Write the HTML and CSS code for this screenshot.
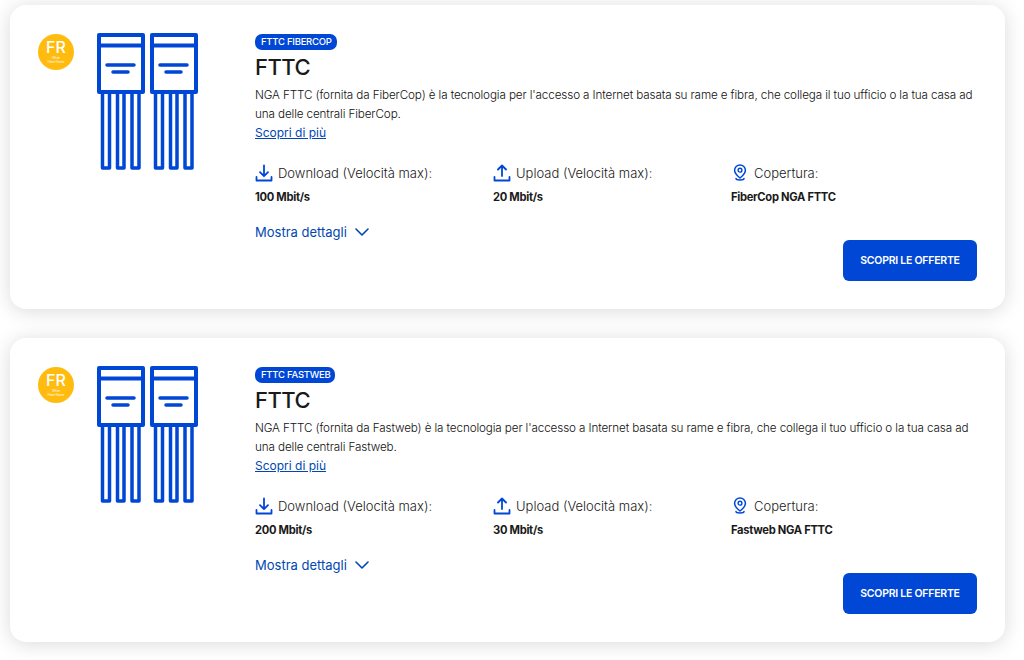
FILE: index.html
```html
<!DOCTYPE html>
<html lang="it">
    <head>
        <title>Offerte FTTC</title>
        <meta charset="utf-8" />
        <link rel="stylesheet" href="styles.css">
    </head>
    <body>
        <svg class="defs" width="0" height="0">
            <symbol id="chip" viewBox="0 0 103 137">
                <g id="chip-half" fill="none" stroke="#0047d6" stroke-linejoin="round" stroke-linecap="round">
                    <rect x="3" y="2" width="44" height="57" stroke-width="4" />
                    <path d="M3 12.5H47" stroke-width="4" />
                    <path d="M11 32H38M17 39H32" stroke-width="3.5" />
                    <path d="M6.5 60V135H13.5V60M21.5 60V135H28V60M36 60V135H43V60" stroke-width="3.5" />
                </g>
                <use href="#chip-half" x="53" />
            </symbol>
            <symbol id="icon-download" viewBox="0 0 18 18">
                <path d="M9 1.5V12M5 8.2L9 12.2L13 8.2M1.5 13V16.5H16.5V13" fill="none" stroke="#0047d6" stroke-width="1.8" stroke-linecap="round" stroke-linejoin="round" />
            </symbol>
            <symbol id="icon-upload" viewBox="0 0 18 18">
                <path d="M9 12V1.5M5 5.5L9 1.5L13 5.5M1.5 13V16.5H16.5V13" fill="none" stroke="#0047d6" stroke-width="1.8" stroke-linecap="round" stroke-linejoin="round" />
            </symbol>
            <symbol id="icon-pin" viewBox="0 0 18 18">
                <path d="M9 14C6 11.6 3.6 9.2 3.6 6.2A5.4 5.2 0 0 1 14.4 6.2C14.4 9.2 12 11.6 9 14ZM5 14.6C5 16.6 13 16.6 13 14.6" fill="none" stroke="#0047d6" stroke-width="1.5" stroke-linecap="round" stroke-linejoin="round" />
                <circle cx="9" cy="6.2" r="1.9" fill="none" stroke="#0047d6" stroke-width="1.4" />
            </symbol>
        </svg>

        <div class="list">
            <div class="card">
                <div class="logo">
                    <span class="logo-big">FR</span>
                    <span class="logo-small">White<br>Fibre Home</span>
                </div>
                <svg class="chip"><use href="#chip" /></svg>
                <div class="main">
                    <span class="badge">FTTC FIBERCOP</span>
                    <h2 class="title">FTTC</h2>
                    <p class="desc">NGA FTTC (fornita da FiberCop) è la tecnologia per l'accesso a Internet basata su rame e fibra, che collega il tuo ufficio o la tua casa ad una delle centrali FiberCop.</p>
                    <a class="more" href="#">Scopri di più</a>
                    <div class="stats">
                        <div class="stat">
                            <div class="stat-label"><svg class="stat-icon"><use href="#icon-download" /></svg>Download (Velocità max):</div>
                            <div class="stat-value">100 Mbit/s</div>
                        </div>
                        <div class="stat">
                            <div class="stat-label"><svg class="stat-icon"><use href="#icon-upload" /></svg>Upload (Velocità max):</div>
                            <div class="stat-value">20 Mbit/s</div>
                        </div>
                        <div class="stat">
                            <div class="stat-label"><svg class="stat-icon"><use href="#icon-pin" /></svg>Copertura:</div>
                            <div class="stat-value">FiberCop NGA FTTC</div>
                        </div>
                    </div>
                    <a class="details" href="#">Mostra dettagli
                        <svg class="chevron" viewBox="0 0 14 8"><path d="M1 1L7 7L13 1" /></svg>
                    </a>
                    <div class="actions"><a class="btn" href="#">SCOPRI LE OFFERTE</a></div>
                </div>
            </div>

            <div class="card">
                <div class="logo">
                    <span class="logo-big">FR</span>
                    <span class="logo-small">White<br>Fibre Home</span>
                </div>
                <svg class="chip"><use href="#chip" /></svg>
                <div class="main">
                    <span class="badge">FTTC FASTWEB</span>
                    <h2 class="title">FTTC</h2>
                    <p class="desc">NGA FTTC (fornita da Fastweb) è la tecnologia per l'accesso a Internet basata su rame e fibra, che collega il tuo ufficio o la tua casa ad una delle centrali Fastweb.</p>
                    <a class="more" href="#">Scopri di più</a>
                    <div class="stats">
                        <div class="stat">
                            <div class="stat-label"><svg class="stat-icon"><use href="#icon-download" /></svg>Download (Velocità max):</div>
                            <div class="stat-value">200 Mbit/s</div>
                        </div>
                        <div class="stat">
                            <div class="stat-label"><svg class="stat-icon"><use href="#icon-upload" /></svg>Upload (Velocità max):</div>
                            <div class="stat-value">30 Mbit/s</div>
                        </div>
                        <div class="stat">
                            <div class="stat-label"><svg class="stat-icon"><use href="#icon-pin" /></svg>Copertura:</div>
                            <div class="stat-value">Fastweb NGA FTTC</div>
                        </div>
                    </div>
                    <a class="details" href="#">Mostra dettagli
                        <svg class="chevron" viewBox="0 0 14 8"><path d="M1 1L7 7L13 1" /></svg>
                    </a>
                    <div class="actions"><a class="btn" href="#">SCOPRI LE OFFERTE</a></div>
                </div>
            </div>
        </div>
    </body>
</html>
```

FILE: styles.css
```css
html,
body {
    margin: 0;
    padding: 0;
    height: 660px;
    overflow: hidden;
    background-color: #fff;
    color: #1a1a1a;
    font-family: Inter, 'Open Sans', sans-serif;
}

.defs {
    display: block;
}

.list {
    display: flex;
    flex-direction: column;
    gap: 29px;
    width: 995px;
    margin-left: 10px;
    padding-top: 5px;
}

.card {
    display: flex;
    box-sizing: border-box;
    height: 304px;
    padding: 28px 28px 0;
    background-color: #fff;
    border-radius: 16px;
    box-shadow: 0 2px 20px rgba(0, 0, 0, 0.15);
}

.logo {
    display: flex;
    flex-direction: column;
    align-items: center;
    flex-shrink: 0;
    box-sizing: border-box;
    width: 36px;
    height: 36px;
    margin-top: 1px;
    padding-top: 5px;
    border-radius: 50%;
    background-color: #ffbb0e;
    color: #fff;
}

.logo-big {
    font-size: 16px;
    font-weight: 500;
    line-height: 17px;
}

.logo-small {
    font-size: 3px;
    line-height: 4px;
    text-align: center;
}

.chip {
    flex-shrink: 0;
    width: 103px;
    height: 137px;
    margin: 0 56px 0 22px;
}

.main {
    flex: 1;
    min-width: 0;
}

.badge {
    display: block;
    width: fit-content;
    height: 16px;
    padding: 0 5px 0 6px;
    margin-top: 1px;
    border-radius: 7px;
    background-color: #0047d6;
    color: #fff;
    font-size: 9.5px;
    font-weight: 500;
    letter-spacing: -0.25px;
    line-height: 16px;
}

.title {
    margin: 2px 0 0;
    font-size: 22px;
    font-weight: 500;
    letter-spacing: -0.5px;
    line-height: 30px;
}

.desc {
    margin: 4px 0 0;
    color: #111;
    font-size: 11.7px;
    font-weight: 350;
    letter-spacing: -0.125px;
    line-height: 19px;
}

.more {
    display: block;
    width: fit-content;
    margin-top: -1px;
    color: #0047b3;
    font-size: 12px;
    line-height: 19px;
}

.stats {
    display: grid;
    grid-template-columns: repeat(3, 238px);
    margin-top: 21px;
}

.stat-label {
    display: flex;
    align-items: center;
    gap: 5px;
    height: 20px;
    font-size: 13px;
    font-weight: 300;
}

.stat-icon {
    flex-shrink: 0;
    width: 18px;
    height: 18px;
}

.stat-value {
    margin-top: 7px;
    font-size: 11.2px;
    font-weight: 700;
    letter-spacing: -0.3px;
    line-height: 15px;
}

.details {
    display: flex;
    align-items: center;
    gap: 8px;
    margin-top: 19px;
    color: #0047b3;
    font-size: 13px;
    line-height: 16px;
    text-decoration: none;
}

.chevron {
    width: 14px;
    height: 8px;
    fill: none;
    stroke: #0047b3;
    stroke-width: 1.6;
    stroke-linecap: round;
    stroke-linejoin: round;
}

.actions {
    display: flex;
    justify-content: flex-end;
}

.btn {
    display: block;
    width: 134px;
    height: 41px;
    border-radius: 6px;
    background-color: #0047d6;
    color: #fff;
    font-size: 10.5px;
    font-weight: 600;
    letter-spacing: -0.25px;
    line-height: 41px;
    text-align: center;
    text-decoration: none;
}
```
